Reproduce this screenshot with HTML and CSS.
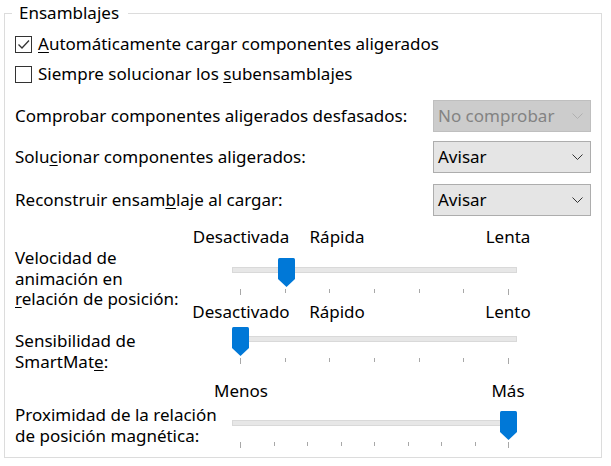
FILE: index.html
```html
<!DOCTYPE html>
<html lang="es">
<head>
  <meta charset="UTF-8">
  <meta name="viewport" content="width=device-width, initial-scale=1.0">
  <title>Ensamblajes</title>
  <link rel="stylesheet" href="styles.css">
</head>
<body>
  <fieldset class="group">
    <legend class="group-title">Ensamblajes</legend>

    <!-- Checkboxes -->
    <label class="check-row first">
      <span class="check-box">
        <svg width="15" height="15" viewBox="0 0 15 15"><path d="M2.5 7.5 L6 11 L13 3.5" fill="none" stroke="#333" stroke-width="1.3"/></svg>
      </span>
      <span><u>A</u>utomáticamente cargar componentes aligerados</span>
    </label>
    <label class="check-row">
      <span class="check-box"></span>
      <span>Siempre solucionar los <u>s</u>ubensamblajes</span>
    </label>

    <!-- Combo rows -->
    <div class="option-row row-1">
      <span>Comprobar componentes aligerados desfasados:</span>
      <div class="combo disabled">
        <span>No comprobar</span>
        <svg class="chevron" width="11" height="6" viewBox="0 0 11 6"><path d="M0.5 0.5 L5.5 5.5 L10.5 0.5" fill="none" stroke="#b0b0b0" stroke-width="1"/></svg>
      </div>
    </div>
    <div class="option-row row-2">
      <span>Solu<u>c</u>ionar componentes aligerados:</span>
      <div class="combo">
        <span>Avisar</span>
        <svg class="chevron" width="11" height="6" viewBox="0 0 11 6"><path d="M0.5 0.5 L5.5 5.5 L10.5 0.5" fill="none" stroke="#333" stroke-width="1"/></svg>
      </div>
    </div>
    <div class="option-row row-3">
      <span>Reconstruir ensam<u>b</u>laje al cargar:</span>
      <div class="combo">
        <span>Avisar</span>
        <svg class="chevron" width="11" height="6" viewBox="0 0 11 6"><path d="M0.5 0.5 L5.5 5.5 L10.5 0.5" fill="none" stroke="#333" stroke-width="1"/></svg>
      </div>
    </div>

    <!-- Sliders -->
    <div class="slider-row speed">
      <div class="slider-label">Velocidad de<br>animación en<br><u>r</u>elación de posición:</div>
      <div class="slider-col">
        <div class="scale">
          <span class="scale-start">Desactivada</span>
          <span class="scale-mid">Rápida</span>
          <span class="scale-end">Lenta</span>
        </div>
        <div class="slider">
          <div class="track"></div>
          <div class="ticks"><i></i><i></i><i></i><i></i><i></i><i></i><i></i></div>
          <svg class="thumb" style="left: 46px" width="17" height="29" viewBox="0 0 17 29"><path d="M0 1.5 Q0 0 1.5 0 H15.5 Q17 0 17 1.5 V21 L8.5 29 L0 21 Z" fill="#0078d7"/></svg>
        </div>
      </div>
    </div>

    <div class="slider-row smartmate">
      <div class="slider-label">Sensibilidad de<br>SmartMat<u>e</u>:</div>
      <div class="slider-col">
        <div class="scale">
          <span class="scale-start">Desactivado</span>
          <span class="scale-mid">Rápido</span>
          <span class="scale-end">Lento</span>
        </div>
        <div class="slider">
          <div class="track"></div>
          <div class="ticks"><i></i><i></i><i></i><i></i><i></i><i></i><i></i></div>
          <svg class="thumb" style="left: 0px" width="17" height="29" viewBox="0 0 17 29"><path d="M0 1.5 Q0 0 1.5 0 H15.5 Q17 0 17 1.5 V21 L8.5 29 L0 21 Z" fill="#0078d7"/></svg>
        </div>
      </div>
    </div>

    <div class="slider-row magnetic">
      <div class="slider-label">Proximidad de la relación<br>de posición magnética:</div>
      <div class="slider-col">
        <div class="scale">
          <span class="scale-start">Menos</span>
          <span class="scale-end">Más</span>
        </div>
        <div class="slider">
          <div class="track"></div>
          <div class="ticks"><i></i><i></i><i></i><i></i><i></i><i></i><i></i><i></i><i></i></div>
          <svg class="thumb" style="left: 268px" width="17" height="29" viewBox="0 0 17 29"><path d="M0 1.5 Q0 0 1.5 0 H15.5 Q17 0 17 1.5 V21 L8.5 29 L0 21 Z" fill="#0078d7"/></svg>
        </div>
      </div>
    </div>
  </fieldset>
</body>
</html>
```

FILE: styles.css
```css
/* General */
* {
  box-sizing: border-box;
}

body {
  margin: 0;
  background-color: #fff;
  color: #000;
  font-family: "Noto Sans", "Open Sans", sans-serif;
  font-size: 17px;
  line-height: 20px;
}

u {
  text-decoration-thickness: 1px;
  text-underline-offset: 2px;
}

/* Group box */
.group {
  margin: 3px 9px 0 4px;
  padding: 0 10px 9px 10px;
  border: 1px solid #dcdcdc;
  min-width: 0;
}

.group-title {
  margin-left: -3px;
  padding: 0 9px 0 7px;
  line-height: 20px;
}

/* Checkboxes */
.check-row {
  display: flex;
  align-items: center;
  gap: 6px;
  height: 30px;
}

.check-row.first {
  margin-top: 6px;
}

.check-box {
  width: 17px;
  height: 17px;
  border: 1px solid #333;
  background-color: #fff;
  display: flex;
  align-items: center;
  justify-content: center;
}

/* Combo rows */
.option-row {
  display: flex;
  justify-content: space-between;
  align-items: center;
}

.row-1 {
  margin-top: 11px;
}

.row-2 {
  margin-top: 9px;
}

.row-3 {
  margin-top: 11px;
}

.combo {
  width: 158px;
  height: 32px;
  border: 1px solid #adadad;
  background-color: #e5e5e5;
  display: flex;
  align-items: center;
  justify-content: space-between;
  padding: 0 7px 0 4px;
}

.combo.disabled {
  border-color: #bfbfbf;
  background-color: #cccccc;
  color: #838383;
}

/* Sliders */
.slider-row {
  display: grid;
  grid-template-columns: 217px 1fr;
}

.speed {
  margin-top: 11px;
  height: 68px;
}

.smartmate {
  margin-top: 7px;
  height: 62px;
}

.magnetic {
  margin-top: 17px;
  height: 67px;
}

.slider-label {
  line-height: 20.5px;
}

.speed .slider-label {
  margin-top: 21px;
}

.smartmate .slider-label {
  margin-top: 29px;
}

.magnetic .slider-label {
  margin-top: 24px;
}

.scale {
  display: flex;
  margin-left: -41px;
  width: 367px;
}

.scale span {
  text-align: center;
}

.scale-start {
  width: 100px;
}

.scale-mid {
  width: 92px;
}

.scale-end {
  width: 100px;
  margin-left: auto;
}

.slider {
  position: relative;
  width: 285px;
  height: 37px;
  padding-top: 9px;
}

.speed .slider {
  margin-top: 11px;
}

.smartmate .slider {
  margin-top: 5px;
}

.magnetic .slider {
  margin-top: 10px;
}

.track {
  height: 6px;
  border: 1px solid #d9d9d9;
  background-color: #e7e7e7;
}

.ticks {
  display: flex;
  justify-content: space-between;
  padding: 0 8px;
  margin-top: 16px;
}

.ticks i {
  display: block;
  width: 1px;
  height: 4px;
  background-color: #a8a8a8;
}

.ticks i:first-child,
.ticks i:last-child {
  height: 6px;
}

.thumb {
  position: absolute;
  top: 0;
}
```
